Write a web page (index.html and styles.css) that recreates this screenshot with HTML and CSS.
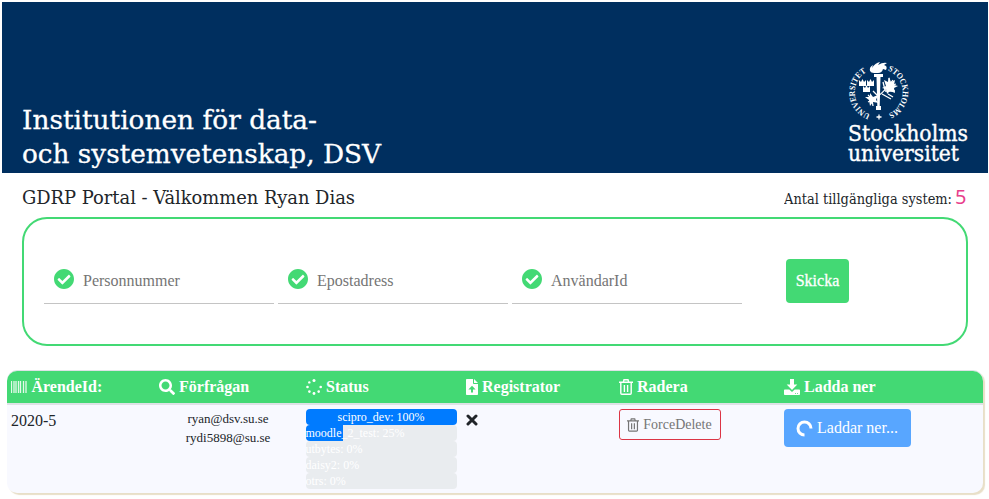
FILE: index.html
```html
<!DOCTYPE html>
<html lang="sv">
<head>
<meta charset="utf-8">
<title>GDRP Portal</title>
<link rel="stylesheet" href="styles.css">
</head>
<body>
<svg class="defs" aria-hidden="true">
  <symbol id="check" viewBox="8 8 496 496"><path d="M504 256c0 136.967-111.033 248-248 248S8 392.967 8 256 119.033 8 256 8s248 111.033 248 248zM227.314 387.314l184-184c6.248-6.248 6.248-16.379 0-22.627l-22.627-22.627c-6.248-6.249-16.379-6.249-22.628 0L216 308.118l-70.059-70.059c-6.248-6.248-16.379-6.248-22.628 0l-22.627 22.627c-6.248 6.248-6.248 16.379 0 22.627l104 104c6.249 6.249 16.379 6.249 22.628.001z"/></symbol>
  <symbol id="trash" viewBox="0 0 14 16"><path d="M0 3.300h14M4.300 3.200 5 .8h4l.7 2.400M1.800 4v10.200q0 1 1 1h8.400q1 0 1-1V4M5.400 6v7M8.600 6v7" fill="none" stroke="currentColor" stroke-width="1.400"/></symbol>
</svg>

<header class="banner">
  <svg class="dept" width="364" height="72" viewBox="0 0 364 72">
    <text x="0" y="27" textLength="295" lengthAdjust="spacingAndGlyphs">Institutionen för data-</text>
    <text x="0" y="61" textLength="359" lengthAdjust="spacingAndGlyphs">och systemvetenskap, DSV</text>
  </svg>
  <svg class="logo" width="122" height="108" viewBox="0 0 122 108">
    <defs>
      <path id="arc-left" d="M22.300 54.300A23.500 23.500 0 0 1 17 12.800"/>
      <path id="arc-right" d="M39.800 10.400A23.500 23.500 0 0 1 38.300 54.600"/>
    </defs>
    <text class="ring"><textPath href="#arc-left" textLength="53" lengthAdjust="spacingAndGlyphs">UNIVERSITET</textPath></text>
    <text class="ring"><textPath href="#arc-right" textLength="55" lengthAdjust="spacingAndGlyphs">STOCKHOLMS</textPath></text>
    <path d="M31 54.500v5M28.500 57h5" class="line"/>
    <path d="M22 11q-1-4 3-6l-1 3q3-5 8-6l-2 3q5-3 9-2l-3 2q4 1 2 5l-3-1q-1 4-5 4h-4q-3 0-4-2zM26 14h9v3h-9zM28.500 17h4l-.8 30q-1.200 3-2.400 0zM28 46h5v4h-5z"/>
    <path d="M11 20l2 2 1.500-3 1.500 3 2-2v6h-7zM19 20l2 2 1.500-3 1.500 3 2-2v6h-7zM15 26l2 2 1.500-3 1.500 3 2-2v6h-7z"/>
    <path class="line" d="M20 42q14-6 25-22M24 39l-4-4M24 40l1 6M30 36l-5-5M37 30l-2-8M37 31l10 0M41 26l7-2M41 26l0-8M34 34l9 5M40 34l5 3"/>
    <path d="M36 20l4 2 1-5 2 5 4-2-1 5 4 1-4 2 1 5-5-2-3 3-1-5-4-1 4-2zM22 33l3 4 5-2-2 5 3 3-6-1-3 4-1-6-4-3 5 0z"/>
    <text class="word" x="0" y="81" textLength="120" lengthAdjust="spacingAndGlyphs">Stockholms</text>
    <text class="word" x="0" y="100.500" textLength="111" lengthAdjust="spacingAndGlyphs">universitet</text>
  </svg>
</header>

<div class="titlebar">
  <svg width="338" height="30" viewBox="0 0 338 30"><text class="title" x="0" y="21" textLength="333" lengthAdjust="spacingAndGlyphs">GDRP Portal - Välkommen Ryan Dias</text></svg>
  <svg class="systems" width="184" height="30" viewBox="0 0 184 30"><text class="count-label" x="0" y="21" textLength="168" lengthAdjust="spacingAndGlyphs">Antal tillgängliga system:</text><text class="count" x="171" y="21">5</text></svg>
</div>

<section class="request">
  <div class="field"><svg class="ok"><use href="#check"/></svg><span>Personnummer</span></div>
  <div class="field"><svg class="ok"><use href="#check"/></svg><span>Epostadress</span></div>
  <div class="field"><svg class="ok"><use href="#check"/></svg><span>AnvändarId</span></div>
  <div class="send">Skicka</div>
</section>

<main class="table">
  <div class="row head">
    <div class="cell"><svg width="16" height="16" viewBox="0 0 16 16"><path d="M.5 2v12M3 2v12M5 2v12M7.500 2v12M9.500 2v12M12.500 2v12M15 2v12" stroke="currentColor" stroke-width="1.300" opacity=".85"/></svg><span>ÄrendeId:</span></div>
    <div class="cell"><svg width="16" height="16" viewBox="0 0 512 512"><path d="M505 442.700L405.300 343c-4.500-4.500-10.600-7-17-7H372c27.600-35.300 44-79.700 44-128C416 93.100 322.900 0 208 0S0 93.100 0 208s93.100 208 208 208c48.300 0 92.700-16.400 128-44v16.300c0 6.400 2.500 12.500 7 17l99.700 99.700c9.400 9.400 24.600 9.400 33.900 0l28.300-28.300c9.400-9.400 9.400-24.600.1-34zM208 336c-70.700 0-128-57.200-128-128 0-70.700 57.200-128 128-128 70.700 0 128 57.200 128 128 0 70.700-57.200 128-128 128z"/></svg><span>Förfrågan</span></div>
    <div class="cell"><svg width="16" height="16" viewBox="0 0 16 16"><circle cx="8" cy="1.500" r="1.500"/><circle cx="3.300" cy="3.400" r="1.200"/><circle cx="1.500" cy="8" r="1.300"/><circle cx="3.400" cy="12.600" r="1.300"/><circle cx="8" cy="14.500" r="1.400"/><circle cx="12.700" cy="12.600" r="1.300"/><circle cx="14.700" cy="8" r="1.300"/></svg><span>Status</span></div>
    <div class="cell"><svg width="12" height="16" viewBox="0 0 12 16"><path fill-rule="evenodd" d="M.8 0H7v4.200q0 .8.8.8H12v10.200q0 .8-.8.8H.8Q0 16 0 15.200V.8Q0 0 .8 0zM8 0l4 4H8zM6 6.800 2.400 10.500H5V13.500h2v-3h2.600z"/></svg><span>Registrator</span></div>
    <div class="cell"><svg width="14" height="16"><use href="#trash"/></svg><span>Radera</span></div>
    <div class="cell"><svg width="16" height="16" viewBox="0 0 16 16"><path fill-rule="evenodd" d="M6 0h4v5.500h3.300L8 11 2.700 5.500H6zM.8 10.500h4.500L8 13l2.700-2.500h4.500q.8 0 .8.800v4q0 .7-.8.700H.8q-.8 0-.8-.7v-4q0-.8.800-.8zM11 14h1v.8h-1zM13 14h1v.8h-1z"/></svg><span>Ladda ner</span></div>
  </div>
  <div class="row body">
    <div class="cell">2020-5</div>
    <div class="cell mails"><div>ryan@dsv.su.se</div><div>rydi5898@su.se</div></div>
    <div class="cell bars">
      <div class="progress"><div class="bar" style="width:100%">scipro_dev: 100%</div></div>
      <div class="progress"><div class="bar" style="width:25%">moodle_2_test: 25%</div></div>
      <div class="progress"><div class="bar" style="width:0%">utbytes: 0%</div></div>
      <div class="progress"><div class="bar" style="width:0%">daisy2: 0%</div></div>
      <div class="progress"><div class="bar" style="width:0%">otrs: 0%</div></div>
    </div>
    <div class="cell"><svg class="cross" width="12" height="12" viewBox="0 0 12 12"><path d="M2 2l8 8M10 2l-8 8" stroke="currentColor" stroke-width="3" stroke-linecap="round"/></svg></div>
    <div class="cell"><div class="delete"><svg width="12" height="14"><use href="#trash"/></svg><span>ForceDelete</span></div></div>
    <div class="cell"><div class="download"><svg width="17" height="17" viewBox="0 0 17 17"><path d="M15 8.500A6.500 6.500 0 1 0 8.500 15" fill="none" stroke="currentColor" stroke-width="3"/></svg><span>Laddar ner...</span></div></div>
  </div>
</main>
</body>
</html>
```
FILE: styles.css
```css
* { box-sizing: border-box; }
body {
  margin: 0;
  height: 499px;
  overflow: hidden;
  padding: 2px 1px 0 2px;
  background: #fff;
  color: #212529;
  font: 16px/24px "Liberation Serif", serif;
}
svg { display: block; flex: none; fill: currentColor; }
.defs { width: 0; height: 0; position: absolute; }

.banner {
  height: 171px;
  display: flex;
  justify-content: space-between;
  align-items: flex-end;
  padding: 0 18px 0 20px;
  background: #002f5f;
  color: #fff;
}
.dept { font: 26.5px "DejaVu Serif", serif; stroke: #fff; stroke-width: .3px; margin-bottom: -1px; }
.logo { margin-bottom: 5px; overflow: visible; }
.ring { font: bold 8.5px "Liberation Serif", serif; }
.word { font: 22px "DejaVu Serif", serif; stroke: #fff; stroke-width: .4px; }
.line { fill: none; stroke: currentColor; stroke-width: 1.3; }

.titlebar {
  height: 44px;
  display: flex;
  justify-content: space-between;
  padding: 10px 20px 0 20px;
}
.title { font: 18.5px "DejaVu Serif Condensed", "DejaVu Serif", serif; }
.count-label { font: 15px "DejaVu Serif Condensed", "DejaVu Serif", serif; }
.count { font: 20px "Noto Sans", sans-serif; fill: #e83e8c; }

.request {
  display: flex;
  align-items: flex-start;
  gap: 4px;
  height: 129px;
  margin: 0 20px 0 20px;
  padding: 40px 20px 0;
  border: 2px solid #43d974;
  border-radius: 25px;
}
.field {
  display: flex;
  align-items: center;
  gap: 9px;
  width: 230px;
  height: 45px;
  padding: 0 10px;
  border-bottom: 1px solid #c4c4c4;
  color: #757575;
  font-size: 16px;
}
.ok { width: 20px; height: 20px; margin-top: -4px; color: #43d974; }
.send {
  width: 63px;
  height: 44px;
  margin-left: 40px;
  border-radius: 4px;
  background: #43d974;
  color: #fff;
  font-size: 16px;
  line-height: 44px;
  text-align: center;
  -webkit-text-stroke: .3px #fff;
}

.table {
  width: 976px;
  height: 123px;
  margin: 24px 0 0 5px;
  border-top: 1px solid #dee2e6;
  border-radius: 10px;
  background: #f8f9ff;
  box-shadow: 2px 2px 1px #e8dfc8;
}
.row {
  display: grid;
  grid-template-columns: 147.5px 147px 160px 153px 165px 1fr;
}
.cell { padding: 5px 4px; }
.head {
  height: 34px;
  border-radius: 10px 10px 0 0;
  border-bottom: 2px solid #dee2e6;
  background: #43d974;
  color: #fff;
  font-weight: bold;
}
.head .cell { display: flex; align-items: center; gap: 4.5px; padding: 0 4px 1px; }
.body .cell { padding-top: 4px; }
.mails { font-size: 13px; line-height: 19px; text-align: center; }
.body .bars { padding: 4px 5px 0 4px; }
.progress {
  display: flex;
  height: 16px;
  border-radius: 4px;
  overflow: hidden;
  background: #e9ecef;
  color: #fff;
  font-size: 12px;
  line-height: 16px;
}
.bar { background: #007bff; text-align: center; white-space: nowrap; }
.cross { margin: 5px 0 0 0; }
.delete {
  display: flex;
  align-items: center;
  justify-content: center;
  gap: 4px;
  width: 102px;
  height: 31px;
  border: 1px solid #dc3545;
  border-radius: 3px;
  color: #757575;
  font-size: 14px;
}
.delete svg { overflow: visible; }
.download {
  display: flex;
  align-items: center;
  justify-content: center;
  gap: 4px;
  width: 127px;
  height: 38px;
  border-radius: 4px;
  background: #58a6ff;
  color: #fff;
}
```
